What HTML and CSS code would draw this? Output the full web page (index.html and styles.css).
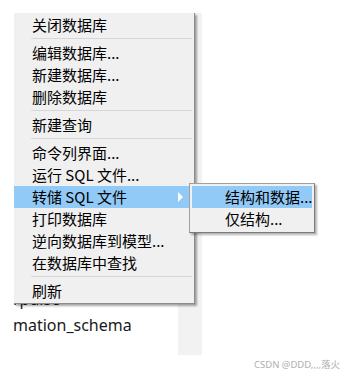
FILE: index.html
```html
<!DOCTYPE html>
<html lang="zh-CN">
<head>
    <meta charset="UTF-8">
    <meta name="viewport" content="width=device-width, initial-scale=1.0">
    <title>数据库菜单</title>
    <link rel="stylesheet" href="styles.css">
</head>
<body>
    <div class="screen">
        <div class="tree">
            <ul class="db-list">
                <li>rpulse</li>
                <li>mation_schema</li>
            </ul>
            <div class="side"></div>
        </div>

        <div class="menu">
            <div class="item">关闭数据库</div>
            <div class="sep"></div>
            <div class="item">编辑数据库...</div>
            <div class="item">新建数据库...</div>
            <div class="item">删除数据库</div>
            <div class="sep"></div>
            <div class="item">新建查询</div>
            <div class="sep"></div>
            <div class="item">命令列界面...</div>
            <div class="item">运行 SQL 文件...</div>
            <div class="item active">转储 SQL 文件<span class="arrow"></span></div>
            <div class="item">打印数据库</div>
            <div class="item">逆向数据库到模型...</div>
            <div class="item">在数据库中查找</div>
            <div class="sep"></div>
            <div class="item">刷新</div>
        </div>

        <div class="submenu">
            <div class="item active">结构和数据...</div>
            <div class="item">仅结构...</div>
        </div>

        <div class="watermark">CSDN @DDD,,,,落火</div>
    </div>
</body>
</html>
```

FILE: styles.css
```css
body {
    margin: 0;
    background: #fff;
    font-family: "Noto Sans", "Noto Sans CJK SC", sans-serif;
}
.screen {
    position: relative;
    width: 344px;
    height: 376px;
    overflow: hidden;
}
.tree {
    display: flex;
}
.db-list {
    list-style: none;
    margin: 0;
    padding: 286px 0 0 13px;
    width: 165px;
    font-size: 16px;
    line-height: 26px;
    color: #1a1a1a;
}
.side {
    width: 24px;
    height: 342px;
    margin-top: 13px;
    background: #f2f2f2;
}
.menu {
    position: absolute;
    left: 14px;
    top: 13px;
    width: 180px;
    padding: 1px 0 1px 0;
    background: #f0f0f0;
    border-right: 1px solid #8c8c8c;
    border-bottom: 1px solid #8c8c8c;
    box-shadow: 2px 2px 2px rgba(0, 0, 0, 0.35);
    font-family: "Noto Sans CJK SC", sans-serif;
    font-size: 15px;
    color: #000;
}
.item {
    position: relative;
    height: 22px;
    line-height: 22px;
    padding-left: 18px;
    white-space: nowrap;
}
.item.active {
    background: #91c9f7;
}
.sep {
    height: 1px;
    margin: 2px 2px 3px 17px;
    background: #d7d7d7;
}
.arrow {
    position: absolute;
    left: 164px;
    top: 6px;
    border-left: 5px solid #fff;
    border-top: 5px solid transparent;
    border-bottom: 5px solid transparent;
}
.submenu {
    position: absolute;
    left: 189px;
    top: 183px;
    width: 120px;
    padding: 2px;
    background: #f0f0f0;
    border: 1px solid #a0a0a0;
    border-right-color: #7a7a7a;
    border-bottom-color: #7a7a7a;
    box-shadow: 2px 2px 2px rgba(0, 0, 0, 0.3);
    font-family: "Noto Sans CJK SC", sans-serif;
    font-size: 15px;
    color: #000;
}
.submenu .item {
    padding-left: 33px;
}
.watermark {
    position: absolute;
    right: 4px;
    bottom: 5px;
    font-size: 9.5px;
    color: #b0b0b0;
}
```
